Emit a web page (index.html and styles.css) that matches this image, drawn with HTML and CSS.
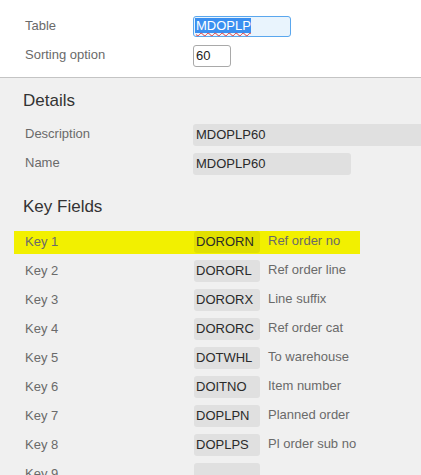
FILE: index.html
```html
<!DOCTYPE html>
<html>
<head>
<meta charset="utf-8">
<link rel="stylesheet" href="styles.css">
</head>
<body>
<div class="top">
  <div class="frow">
    <div class="flabel">Table</div>
    <div class="input input-focus"><span class="sel">MDOPLP</span></div>
  </div>
  <div class="frow">
    <div class="flabel">Sorting option</div>
    <div class="input input-small">60</div>
  </div>
</div>
<div class="details">
  <h2 class="heading">Details</h2>
  <div class="drow">
    <div class="dlabel">Description</div>
    <div class="box box-wide">MDOPLP60</div>
  </div>
  <div class="drow">
    <div class="dlabel">Name</div>
    <div class="box box-name">MDOPLP60</div>
  </div>
  <h2 class="heading heading-keys">Key Fields</h2>
  <div class="keys">
    <div class="krow krow-hl"><div class="klabel">Key 1</div><div class="box kbox">DORORN</div><div class="kdesc">Ref order no</div></div>
    <div class="krow"><div class="klabel">Key 2</div><div class="box kbox">DORORL</div><div class="kdesc">Ref order line</div></div>
    <div class="krow"><div class="klabel">Key 3</div><div class="box kbox">DORORX</div><div class="kdesc">Line suffix</div></div>
    <div class="krow"><div class="klabel">Key 4</div><div class="box kbox">DORORC</div><div class="kdesc">Ref order cat</div></div>
    <div class="krow"><div class="klabel">Key 5</div><div class="box kbox">DOTWHL</div><div class="kdesc">To warehouse</div></div>
    <div class="krow"><div class="klabel">Key 6</div><div class="box kbox">DOITNO</div><div class="kdesc">Item number</div></div>
    <div class="krow"><div class="klabel">Key 7</div><div class="box kbox">DOPLPN</div><div class="kdesc">Planned order</div></div>
    <div class="krow"><div class="klabel">Key 8</div><div class="box kbox">DOPLPS</div><div class="kdesc">Pl order sub no</div></div>
    <div class="krow"><div class="klabel">Key 9</div><div class="box kbox"></div><div class="kdesc"></div></div>
  </div>
</div>
</body>
</html>
```
FILE: styles.css
```css
html {
  overflow: hidden;
}
body {
  margin: 0;
  background: #f0f0f0;
  font-family: "Liberation Sans", Arial, sans-serif;
  font-size: 13px;
  overflow: hidden;
}
.top {
  background: #fff;
  padding: 16px 0 10px 25px;
  border-bottom: 1px solid #c4c4c4;
  display: flex;
  flex-direction: column;
  gap: 8px;
}
.frow {
  display: flex;
  align-items: flex-start;
}
.flabel {
  width: 168px;
  flex: none;
  color: #6a6a6a;
  line-height: 16px;
  padding-top: 2px;
}
.input {
  box-sizing: border-box;
  height: 22px;
  border: 1px solid #a9a9a9;
  border-radius: 3px;
  background: #fff;
  color: #222;
  line-height: 20px;
  padding-left: 2px;
}
.input-focus {
  width: 98px;
  height: 21px;
  line-height: 19px;
  border-color: #5aa7ee;
  background: #e9f4fd;
  padding-left: 1px;
}
.sel {
  display: inline-block;
  background: #3a8ff0;
  color: #fff;
  line-height: 15px;
  padding: 0 0 0 1px;
  text-decoration: underline wavy #e23b3b;
  text-decoration-thickness: 1px;
  text-underline-offset: 2px;
  vertical-align: 1px;
}
.input-small {
  width: 38px;
}
.details {
  padding: 13px 0 0 0;
}
.heading {
  margin: 0 0 13px 23px;
  font-size: 17px;
  font-weight: normal;
  line-height: 20px;
  color: #333;
}
.heading-keys {
  margin-top: 22px;
  margin-bottom: 14px;
}
.drow {
  display: flex;
  align-items: flex-start;
  padding-left: 25px;
  margin-bottom: 7px;
}
.dlabel {
  width: 168px;
  flex: none;
  color: #6a6a6a;
  line-height: 16px;
  padding-top: 2px;
}
.box {
  box-sizing: border-box;
  height: 22px;
  line-height: 22px;
  background: rgba(0, 0, 0, 0.068);
  border-radius: 3px;
  color: #2a2a2a;
  padding-left: 3px;
  white-space: nowrap;
}
.box-wide {
  flex: none;
  width: 320px;
}
.box-name {
  width: 158px;
}
.keys {
  display: flex;
  flex-direction: column;
  gap: 6px;
}
.krow {
  margin-left: 14px;
  width: 346px;
  height: 23px;
  padding-left: 11px;
  box-sizing: border-box;
  display: grid;
  grid-template-columns: 169px 66px auto;
  align-items: start;
}
.krow-hl {
  background: #f2f000;
}
.klabel {
  color: #6a6a6a;
  line-height: 16px;
  padding-top: 3px;
}
.kbox {
  padding-left: 2px;
}
.kdesc {
  color: #6a6a6a;
  line-height: 16px;
  padding-top: 2px;
  padding-left: 8px;
  white-space: nowrap;
}
```
